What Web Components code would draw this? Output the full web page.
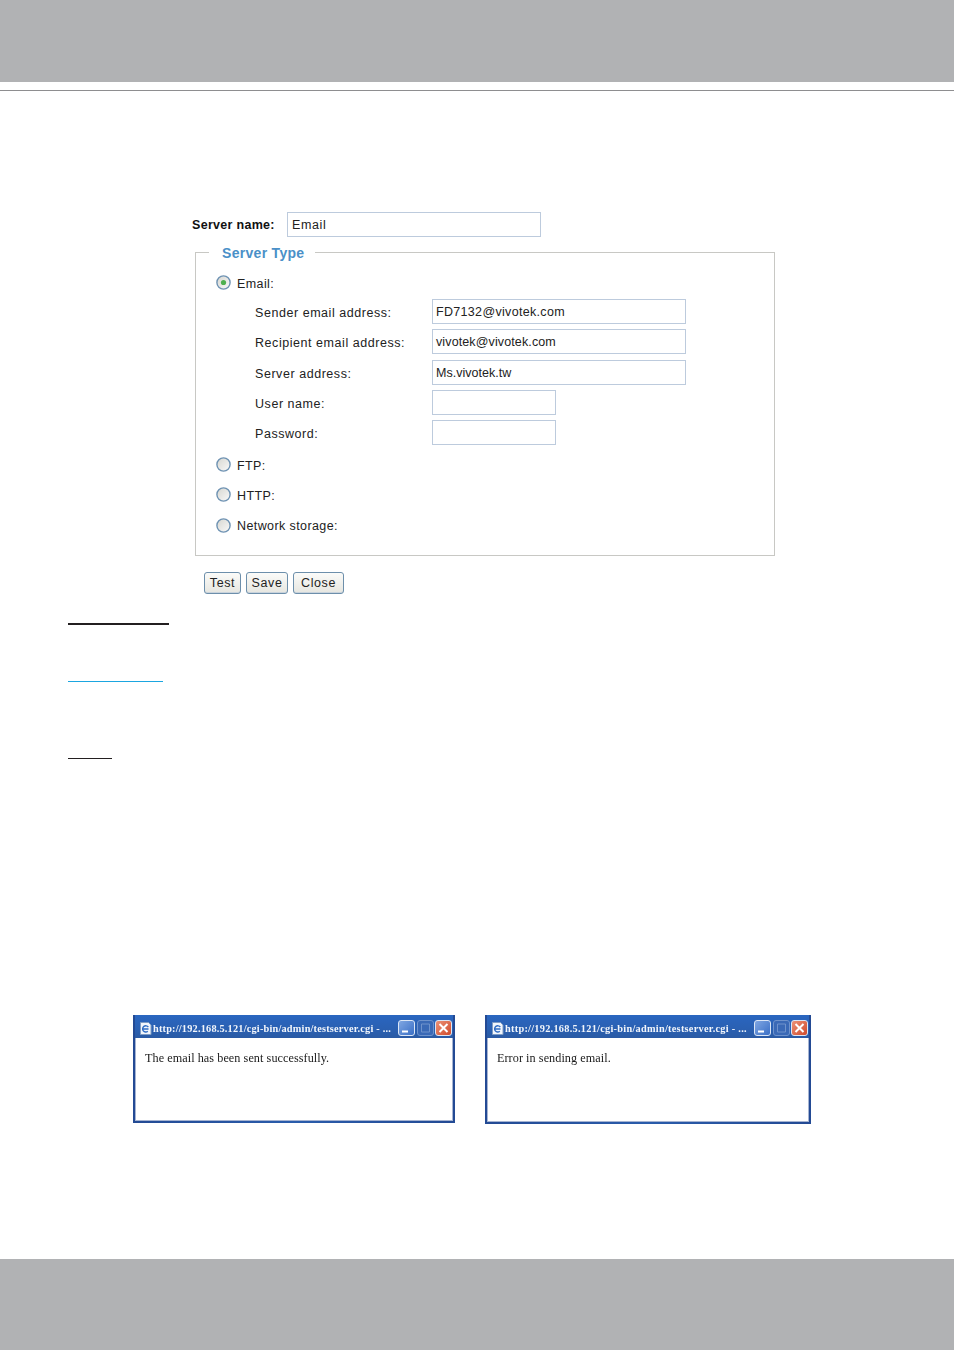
<!DOCTYPE html>
<html>
<head>
<meta charset="utf-8">
<title>Server settings</title>
<style>
    html, body { margin: 0; background: #fff; }
    body { width: 954px; height: 1350px; display: flex; flex-direction: column; font-family: "Liberation Sans", Arial, sans-serif; }
</style>
</head>
<body>
<page-band style="--h:82px"></page-band>
<page-rule style="--w:954px;--t:1px;--c:#8e8e90;--mt:8px;--ml:0"></page-rule>

<server-form></server-form>

<page-rule style="--w:101px;--t:2px;--c:#231f20;--mt:29px;--ml:68px"></page-rule>
<page-rule style="--w:95px;--t:1px;--c:#1ba6e0;--mt:56px;--ml:68px"></page-rule>
<page-rule style="--w:44px;--t:1px;--c:#231f20;--mt:76px;--ml:68px"></page-rule>

<div style="display:flex;gap:30px;margin:256px 0 0 133px;align-items:flex-start">
    <popup-window style="--w:322px;--h:108px;--ls:.2px;--gap:1px">The email has been sent successfully.</popup-window>
    <popup-window style="--w:326px;--h:109px;--ls:.27px;--gap:1px">Error in sending email.</popup-window>
</div>

<page-band style="--h:91px;margin-top:auto"></page-band>

<script>
class PageBand extends HTMLElement {
    constructor() {
        super();
        this.attachShadow({ mode: 'open' });
        this.shadowRoot.innerHTML = `<style>
            :host { display: block; height: var(--h); background: #b1b2b4; flex: none; }
        </style>`;
    }
}
customElements.define("page-band", PageBand);

class PageRule extends HTMLElement {
    constructor() {
        super();
        this.attachShadow({ mode: 'open' });
        this.shadowRoot.innerHTML = `<style>
            :host { display: block; flex: none; width: var(--w); height: var(--t); background: var(--c); margin: var(--mt) 0 0 var(--ml); }
        </style>`;
    }
}
customElements.define("page-rule", PageRule);

class TextBox extends HTMLElement {
    constructor() {
        super();
        this.attachShadow({ mode: 'open' });
        this.shadowRoot.innerHTML = `<style>
            :host { display: block; box-sizing: border-box; height: 25px; width: var(--w, 254px); border: 1px solid #bdcbdd;
                background: #fff; color: #222; font: 12.5px/25px "Liberation Sans", Arial, sans-serif; padding-left: var(--pl, 3px); white-space: nowrap; overflow: hidden; }
        </style><slot></slot>`;
    }
}
customElements.define("text-box", TextBox);

class RadioRow extends HTMLElement {
    constructor() {
        super();
        this.attachShadow({ mode: 'open' });
        const dot = this.hasAttribute("checked") ? '<circle cx="7.5" cy="7.5" r="2.6" fill="#4fb04f"/>' : '';
        this.shadowRoot.innerHTML = `<style>
            :host { display: flex; align-items: center; height: 25px; color: #222; font-size: 12.5px; letter-spacing: .4px; }
            svg { width: 15px; height: 15px; margin: -2px 6px 0 0; flex: none; }
        </style>
        <svg viewBox="0 0 15 15">
            <defs><linearGradient id="g" x1="0" y1="0" x2="1" y2="1"><stop offset="0" stop-color="#d6d6d0"/><stop offset="1" stop-color="#fafafa"/></linearGradient></defs>
            <circle cx="7.5" cy="7.5" r="6.6" fill="url(#g)" stroke="#6f93b3" stroke-width="1.4"/>
            ${dot}
        </svg><slot></slot>`;
    }
}
customElements.define("radio-row", RadioRow);

class FieldRow extends HTMLElement {
    constructor() {
        super();
        this.attachShadow({ mode: 'open' });
        this.shadowRoot.innerHTML = `<style>
            :host { display: grid; grid-template-columns: 177px auto; align-items: center; height: 25px; padding-left: 39px;
                color: #222; font-size: 12.5px; letter-spacing: .55px; }
            .lab { padding-top: var(--lp, 2px); }
        </style><span class="lab"><slot name="label"></slot></span><slot></slot>`;
    }
}
customElements.define("field-row", FieldRow);

class PushButton extends HTMLElement {
    constructor() {
        super();
        this.attachShadow({ mode: 'open' });
        this.shadowRoot.innerHTML = `<style>
            :host { display: flex; align-items: center; justify-content: center; box-sizing: border-box; height: 22px; width: var(--w);
                border: 1px solid #6d8fab; border-radius: 3px; color: #222; font-size: 12.5px; letter-spacing: .6px;
                background: linear-gradient(#fbfbf9, #e6e6e0); box-shadow: inset 0 -1px 0 #c9d3dc; }
        </style><slot></slot>`;
    }
}
customElements.define("push-button", PushButton);

class ServerForm extends HTMLElement {
    constructor() {
        super();
        this.attachShadow({ mode: 'open' });
        this.shadowRoot.innerHTML = `<style>
            :host { display: block; flex: none; margin: 121px 0 0 192px; width: 583px; color: #222; }
            .name { display: flex; align-items: center; gap: 12px; }
            .name b { font-size: 12.5px; color: #111; width: 83px; padding-top: 1px; letter-spacing: .3px; white-space: nowrap; }
            fieldset { box-sizing: border-box; margin: 8px 0 0 3px; width: 580px; height: 311px; padding: 0 0 0 20px;
                border: 1px solid #c8c8c4; display: block; }
            legend { margin-left: -7px; padding: 0 11px 0 13px; height: 14px; font-weight: bold; font-size: 14px; line-height: 16px; color: #4a90c8; letter-spacing: .3px; }
            .rows { display: flex; flex-direction: column; gap: 5.2px; margin-top: 12px; }
            .buttons { display: flex; gap: 5px; margin: 16px 0 0 12px; }
        </style>
        <div class="name"><b>Server name:</b><text-box style="letter-spacing:.6px;--pl:4px">Email</text-box></div>
        <fieldset>
            <legend>Server Type</legend>
            <div class="rows">
                <radio-row checked style="margin-bottom:-2px">Email:</radio-row>
                <field-row><span slot="label">Sender email address:</span><text-box style="letter-spacing:.32px">FD7132@vivotek.com</text-box></field-row>
                <field-row><span slot="label">Recipient email address:</span><text-box style="letter-spacing:.12px">vivotek@vivotek.com</text-box></field-row>
                <field-row style="--lp:4px"><span slot="label">Server address:</span><text-box style="letter-spacing:.02px">Ms.vivotek.tw</text-box></field-row>
                <field-row style="--lp:4px"><span slot="label">User name:</span><text-box style="--w:124px"></text-box></field-row>
                <field-row style="--lp:4px"><span slot="label">Password:</span><text-box style="--w:124px"></text-box></field-row>
                <radio-row style="margin-top:3px">FTP:</radio-row>
                <radio-row>HTTP:</radio-row>
                <radio-row>Network storage:</radio-row>
            </div>
        </fieldset>
        <div class="buttons">
            <push-button style="--w:37px">Test</push-button>
            <push-button style="--w:42px">Save</push-button>
            <push-button style="--w:51px">Close</push-button>
        </div>`;
    }
}
customElements.define("server-form", ServerForm);

class PopupWindow extends HTMLElement {
    constructor() {
        super();
        this.attachShadow({ mode: 'open' });
        this.shadowRoot.innerHTML = `<style>
            :host { display: flex; flex-direction: column; box-sizing: border-box; width: var(--w); height: var(--h); flex: none;
                background: linear-gradient(90deg, #234a94, #2a5cab 50%, #234a94); padding: 0 2px 2px; filter: blur(.4px); }
            .title { display: flex; align-items: center; box-sizing: border-box; height: 23px; flex: none; padding: 3px 1px 0 4px; color: #f2f6fc;
                background: linear-gradient(#2a66c0, #2a60b2 60%, #2a5aa4); }
            .title svg.ic { width: 13px; height: 13px; flex: none; margin-right: var(--gap); }
            .cap { font: bold 10.3px "Liberation Serif", serif; letter-spacing: var(--ls); white-space: nowrap; overflow: hidden; flex: 1; }
            .b { width: 17px; height: 16px; margin-left: 1.5px; flex: none; box-sizing: border-box; border: 1px solid #dbe6f6; border-radius: 3px; display: block; }
            .min { background: linear-gradient(135deg, #7fa6e2, #3a6fc6); }
            .max { background: #3a69b6; border-color: #6f93cc; }
            .cl { background: linear-gradient(135deg, #ec9277, #cf4a2c); }
            .body { flex: 1; background: #fff; border: 1px solid #a6b4d2; border-width: 0 1px 1px; padding: 13px 0 0 9px; color: #1a1a1a;
                font: 12.2px/15px "Liberation Serif", serif; letter-spacing: .06px; }
        </style>
        <div class="title">
            <svg class="ic" viewBox="0 0 13 13">
                <path d="M1.5 .5h8l2.5 2.5v9.5h-10.500z" fill="#f2f6fc" stroke="#7f9cc4"/>
                <path d="M3.500 7h6M9.300 5.200a3.100 3.100 0 1 0-.5 4" fill="none" stroke="#2f6cc4" stroke-width="1.400"/>
            </svg>
            <span class="cap">http://192.168.5.121/cgi-bin/admin/testserver.cgi - ...</span>
            <svg class="b min" viewBox="0 0 15 14"><path d="M3 10.500h6" stroke="#fff" stroke-width="2"/></svg>
            <svg class="b max" viewBox="0 0 15 14"><path d="M3.500 3h8v8h-8z" fill="none" stroke="#6f93cc"/></svg>
            <svg class="b cl" viewBox="0 0 15 14"><path d="M3.500 3l8 8M11.500 3l-8 8" stroke="#fff" stroke-width="2"/></svg>
        </div>
        <div class="body"><slot></slot></div>`;
    }
}
customElements.define("popup-window", PopupWindow);
</script>
</body>
</html>
